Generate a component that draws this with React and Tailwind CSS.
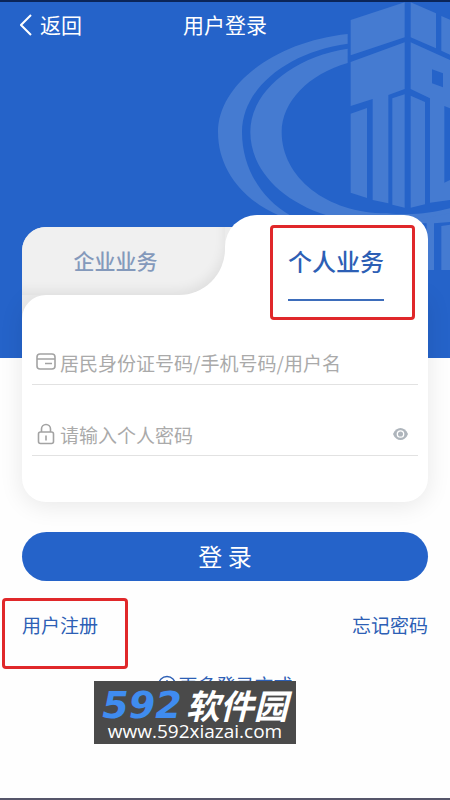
import { useState } from "react";

function Crest() {
  return (
    <svg
      aria-hidden="true"
      viewBox="0 0 750 870"
      className="pointer-events-none absolute top-0 right-0 h-[290px] w-[250px] fill-[#457bd1]"
    >
      <path d="M443 96C220 120 54 250 54 390C54 530 170 640 330 668L620 668L750 640L750 619C690 634 640 641 560 634C380 634 245 526 245 390C245 301 325 216 443 183V140C275 166 151 271 151 390C151 500 240 595 380 640L270 640C185 590 126 500 126 390C126 258 265 149 443 125Z" />
      <path d="M452 54L614 1V106L452 160Z" />
      <path d="M632 1L708 34V139L632 106Z" />
      <path d="M724 42L750 53V158L724 146Z" />
      <path d="M452 180L614 121V261L565 279V604L518 594V291L452 312Z" />
      <path fillRule="evenodd" d="M632 121L750 174V319L733 312V542L750 534V594L690 602V289L632 261ZM696 202V244L729 256V214Z" />
      <path d="M452 335L501 318V588L452 572Z" />
      <path d="M577 289L614 277V617L577 608Z" />
      <path d="M632 281L675 300V607L632 617Z" />
      <path d="M600 662L750 634V660L702 664V804H680V664ZM724 672L750 668V804H724Z" />
    </svg>
  );
}

function CardIcon() {
  return (
    <svg aria-hidden="true" viewBox="0 0 20 18" className="h-[18px] w-5 fill-none stroke-[#a3a3a3] stroke-[1.6]">
      <rect x="1" y="1" width="18" height="15" rx="3" />
      <path d="M1 6h18M9 10.500h7" />
    </svg>
  );
}

function LockIcon() {
  return (
    <svg aria-hidden="true" viewBox="0 0 20 22" className="h-[22px] w-5 fill-none stroke-[#a3a3a3] stroke-[1.6]">
      <rect x="2.500" y="9" width="15" height="11.500" rx="2" />
      <path d="M5.500 9V6a4.500 4.500 0 0 1 9 0v3M10 12.500v5" />
    </svg>
  );
}

function EyeIcon() {
  return (
    <svg aria-hidden="true" viewBox="0 0 15 12" className="h-3 w-[15px]">
      <path d="M0 6C3 -2 12 -2 15 6C12 14 3 14 0 6Z" fill="#aeb5bc" />
      <circle cx="7.500" cy="6" r="3.200" fill="#aeb5bc" stroke="white" strokeWidth="1.300" />
    </svg>
  );
}

export default function App() {
  const [tab, setTab] = useState("personal");
  const [visible, setVisible] = useState(false);
  return (
    <div className="relative flex min-h-screen flex-col overflow-hidden border-b-2 border-[#55556a] bg-[#fefefe] font-['Noto_Sans_CJK_SC',sans-serif] text-[#2d5fb5]">
      <header className="relative h-[358px] border-t-2 border-[#0b2558] bg-[#2563c9] text-[21px] text-white">
        <Crest />
        <div className="relative grid h-[46px] grid-cols-3 items-center px-5">
          <button type="button" className="flex items-center gap-2 justify-self-start">
            <svg aria-hidden="true" viewBox="0 0 12 22" className="h-[22px] w-3 fill-none stroke-white stroke-2">
              <path d="M11 1L1 11L11 21" />
            </svg>
            返回
          </button>
          <h1 className="justify-self-center whitespace-nowrap">用户登录</h1>
        </div>
      </header>

      <main className="relative -mt-[143px] flex flex-col px-[22px]">
        <form onSubmit={(e) => e.preventDefault()}>
          <div role="tablist" className="relative grid h-20 grid-cols-2 items-end">
            <div className="absolute top-3 -bottom-8 left-0 w-60 rounded-tl-3xl bg-[#ececec]" />
            <button
              type="button"
              role="tab"
              aria-selected={tab === "company"}
              onClick={() => setTab("company")}
              className="relative z-10 h-[68px] rounded-tl-3xl text-[21px] font-medium text-[#8499bb]"
            >
              <span className="absolute right-0 bottom-0 size-12 bg-white" />
              <span className="absolute inset-0 rounded-tl-3xl rounded-br-[46px] bg-[#f0f0f0] shadow-[inset_-4px_-8px_12px_-4px_rgba(0,0,0,0.07)]" />
              <span className="relative pr-4">企业业务</span>
            </button>
            <button
              type="button"
              role="tab"
              aria-selected={tab === "personal"}
              onClick={() => setTab("personal")}
              className="relative z-10 flex h-20 flex-col items-end rounded-tl-[32px] rounded-tr-3xl bg-white pt-7 pr-11 text-2xl font-medium"
            >
              <span className="border-b-2 border-[#3d6dbb] pb-5 leading-9">个人业务</span>
              <span className="pointer-events-none absolute top-[10px] right-[13px] h-[95px] w-[145px] rounded-sm border-[3px] border-[#e0282a]" />
            </button>
          </div>

          <div className="relative rounded-3xl rounded-tr-none bg-white px-[10px] pt-11 pb-[46px] text-[19px] shadow-[0_4px_24px_rgba(0,0,0,0.09)]">
            <div className="flex h-[46px] items-center gap-1 border-b border-[#e2e2e2] px-1">
              <CardIcon />
              <input
                aria-label="用户名"
                placeholder="居民身份证号码/手机号码/用户名"
                className="h-10 min-w-0 flex-1 pt-0.5 outline-none placeholder:text-[#aaaaaa]"
              />
            </div>
            <div className="mt-6 flex h-[47px] items-center gap-1 border-b border-[#e2e2e2] px-1 pt-1">
              <LockIcon />
              <input
                aria-label="个人密码"
                type={visible ? "text" : "password"}
                placeholder="请输入个人密码"
                className="h-10 min-w-0 flex-1 outline-none placeholder:text-[#aaaaaa]"
              />
              <button type="button" aria-label="显示密码" onClick={() => setVisible(!visible)} className="px-1.5">
                <EyeIcon />
              </button>
            </div>
          </div>

          <button type="submit" className="mt-[30px] h-[49px] w-full rounded-full bg-[#2563c9] pb-0.5 text-2xl text-white">
            登 录
          </button>
        </form>

        <div className="mt-[30px] flex justify-between text-[19px] leading-7">
          <a href="#register" className="relative">
            用户注册
            <span className="pointer-events-none absolute -top-[13px] -left-5 h-[71px] w-[126px] rounded-sm border-[3px] border-[#e0282a]" />
          </a>
          <a href="#forgot">忘记密码</a>
        </div>

        <button type="button" className="mt-8 flex items-center gap-px self-center text-[19px] leading-7">
          <svg aria-hidden="true" viewBox="0 0 20 20" className="size-5 fill-none stroke-[#2d5fb5] stroke-[1.4]">
            <circle cx="10" cy="10" r="8.500" />
            <path d="M10 5v10M5 10h10" />
          </svg>
          更多登录方式
        </button>
      </main>

      <div className="absolute top-[681px] left-[94px] flex h-[63px] w-[202px] flex-col items-center bg-[#4a4a4a] pt-2 text-white">
        <div className="flex h-8 items-center gap-1 whitespace-nowrap italic">
          <span className="font-['DejaVu_Sans'] text-[38px] leading-8 font-bold text-[#3f8cf0]">592</span>
          <span className="text-[34px] leading-8 font-bold">软件园</span>
        </div>
        <span className="font-['Open_Sans'] text-[19px] leading-5 font-medium">www.592xiazai.com</span>
      </div>
    </div>
  );
}
